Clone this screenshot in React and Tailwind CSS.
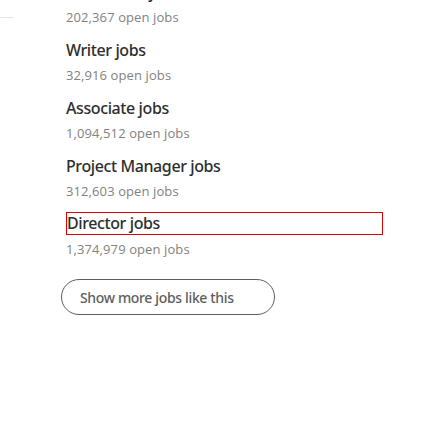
const jobs = [
  { title: 'Consultant jobs', count: '202,367' },
  { title: 'Writer jobs', count: '32,916' },
  { title: 'Associate jobs', count: '1,094,512' },
  { title: 'Project Manager jobs', count: '312,603' },
  { title: 'Director jobs', count: '1,374,979', focused: true },
];

const JobRow = ({ job }) => (
  <li className="flex flex-col">
    <a
      href="#"
      className={
        job.focused
          ? 'block h-[23px] leading-[21px] text-[16px] font-medium tracking-[-0.4px] text-[#2e2e2e] border border-[#e00000] mb-px'
          : 'block h-[24px] leading-[24px] text-[16px] font-medium tracking-[-0.4px] text-[#2e2e2e]'
      }
      style={{ fontFamily: '"Noto Sans", "Open Sans", sans-serif' }}
    >
      {job.title}
    </a>
    <p className="mt-[3px] h-[20px] leading-[20px] text-[13px] tracking-[0.1px] text-[#828282]">
      {job.count} open jobs
    </p>
  </li>
);

export default function App() {
  return (
    <div
      className="relative w-[448px] h-[448px] overflow-hidden bg-white"
      style={{ fontFamily: '"Open Sans", "Liberation Sans", sans-serif' }}
    >
      {/* divider stub from the left column */}
      <div className="absolute left-0 top-[17px] w-[14px] h-px bg-[#e5e5e5]" />

      <div className="pl-[66px] pr-[65px] -mt-[20px]">
        <ul className="flex flex-col gap-[11px]">
          {jobs.map((job) => (
            <JobRow key={job.title} job={job} />
          ))}
        </ul>

        <button
          className="mt-[20px] -ml-[5px] h-[36px] w-[214px] rounded-full border border-[#5e5e5e] pl-[18px] text-left text-[14px] font-medium tracking-[-0.35px] text-[#5e5e5e]"
          style={{ fontFamily: '"Noto Sans", "Open Sans", sans-serif' }}
        >
          Show more jobs like this
        </button>
      </div>
    </div>
  );
}
